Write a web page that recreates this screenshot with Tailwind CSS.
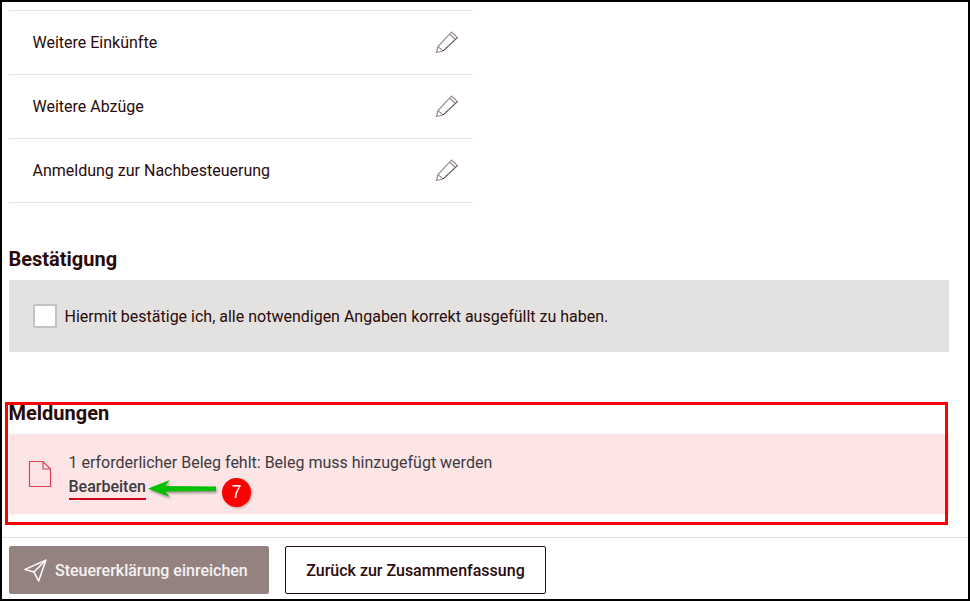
<!DOCTYPE html>
<html lang="de">
  <head>
    <meta charset="UTF-8" />
    <title>Steuererklärung</title>
    <script src="https://cdn.jsdelivr.net/npm/@tailwindcss/browser@4"></script>
  </head>
  <body class="bg-white">
    <div class="relative w-[970px] h-[601px] overflow-hidden border-2 border-black font-['Roboto',sans-serif] text-[16px] text-[#2a0a0a]">
      <!-- Rows -->
      <div class="ml-[7px] mt-[8px] w-[464px] border-t border-[#e3e2e0]">
        <div class="flex items-center justify-between h-[64px] border-b border-[#e3e2e0] pl-[23.500px] pr-[14px]">
          <span>Weitere Einkünfte</span>
          <svg class="w-[24px] h-[24px] mb-[2px]" viewBox="0 0 24 24" fill="none"><path d="M1.500 22.500 L3 16.500 L16.500 2 L22.500 7.500 L8 21 Z M3 16.500 L8 21 M14.500 4 L20.500 9.500" stroke="#9d8f8d" stroke-width="1.200"/><path d="M8 21 L22.500 7.500" stroke="#2a0a0a" stroke-dasharray="1 1"/></svg>
        </div>
        <div class="flex items-center justify-between h-[64px] border-b border-[#e3e2e0] pl-[23.500px] pr-[14px]">
          <span>Weitere Abzüge</span>
          <svg class="w-[24px] h-[24px] mb-[2px]" viewBox="0 0 24 24" fill="none"><path d="M1.500 22.500 L3 16.500 L16.500 2 L22.500 7.500 L8 21 Z M3 16.500 L8 21 M14.500 4 L20.500 9.500" stroke="#9d8f8d" stroke-width="1.200"/><path d="M8 21 L22.500 7.500" stroke="#2a0a0a" stroke-dasharray="1 1"/></svg>
        </div>
        <div class="flex items-center justify-between h-[64px] border-b border-[#e3e2e0] pl-[23.500px] pr-[14px]">
          <span>Anmeldung zur Nachbesteuerung</span>
          <svg class="w-[24px] h-[24px] mb-[2px]" viewBox="0 0 24 24" fill="none"><path d="M1.500 22.500 L3 16.500 L16.500 2 L22.500 7.500 L8 21 Z M3 16.500 L8 21 M14.500 4 L20.500 9.500" stroke="#9d8f8d" stroke-width="1.200"/><path d="M8 21 L22.500 7.500" stroke="#2a0a0a" stroke-dasharray="1 1"/></svg>
        </div>
      </div>

      <!-- Bestätigung -->
      <h2 class="ml-[6.500px] mt-[44px] text-[20px] leading-[24px] font-bold">Bestätigung</h2>
      <div class="ml-[7px] mt-[9px] w-[940px] h-[72px] bg-[#e3e2e0] flex items-center pl-[24px] gap-[7.500px]">
        <span class="block w-[24px] h-[24px] bg-white border-2 border-[#c4c3c1] rounded-[2px]"></span>
        <span class="pt-[2px]">Hiermit bestätige ich, alle notwendigen Angaben korrekt ausgefüllt zu haben.</span>
      </div>

      <!-- Meldungen -->
      <h2 class="ml-[6.500px] mt-[49px] text-[20px] leading-[24px] font-bold">Meldungen</h2>
      <div class="ml-[7px] mt-[9px] w-[940px] h-[80px] bg-[#fce5e4] flex items-center pl-[19px] gap-[16.500px] text-[#3c3a42]">
        <svg class="w-[24px] h-[28px] mb-[1px]" viewBox="0 0 24 28" fill="none" stroke="#e0405a" stroke-width="1.200"><path d="M1.500 1.500 H15 L22.500 9 V26.500 H1.500 Z M15 1.500 V9 H22.500"/></svg>
        <div class="pt-[2px]">
          <p class="leading-[24px]">1 erforderlicher Beleg fehlt: Beleg muss hinzugefügt werden</p>
          <a class="inline-block mt-[1px] leading-[22px] font-medium border-b-2 border-[#d0021b]">Bearbeiten</a>
        </div>
      </div>

      <!-- Footer -->
      <div class="mt-[23px] border-t border-[#e3e2e0] flex items-start gap-[16px] pl-[7px] pt-[8px]">
        <div class="w-[260px] h-[48px] bg-[#948280] rounded-[2px] flex items-center pl-[15px] gap-[8px] text-white/90 font-medium">
          <svg class="w-[23px] h-[23px]" viewBox="0 0 22 22" fill="none" stroke="#fff" stroke-width="1.400" stroke-linejoin="round"><path d="M1 10 L21 1 L14 21 L9.500 12.500 Z M9.500 12.500 L21 1"/></svg>
          <span class="pt-[2px]">Steuererklärung einreichen</span>
        </div>
        <div class="w-[261px] h-[48px] pt-[2px] bg-white border border-[#2a0a0a] rounded-[2px] flex items-center justify-center font-medium">Zurück zur Zusammenfassung</div>
      </div>

      <!-- Annotation overlay -->
      <div class="absolute left-[3px] top-[400px] w-[943px] h-[123px] border-[3px] border-[#ff0000]"></div>
      <svg class="absolute left-[144px] top-[476px] w-[76px] h-[24px] drop-shadow-[1px_2px_1px_rgba(0,0,0,0.35)]" viewBox="0 0 76 24"><path d="M2 10.500 L24 2 L19 8 L70 8.500 V13 L19 13.500 L24 19 Z" fill="#00c000"/></svg>
      <div class="absolute left-[220px] top-[476px] w-[29px] h-[29px] rounded-full bg-[#ff0000] text-white text-[18px] flex items-center justify-center font-['Liberation_Sans',sans-serif] drop-shadow-[1px_1px_1px_rgba(0,0,0,0.3)]">7</div>
    </div>
  </body>
</html>
